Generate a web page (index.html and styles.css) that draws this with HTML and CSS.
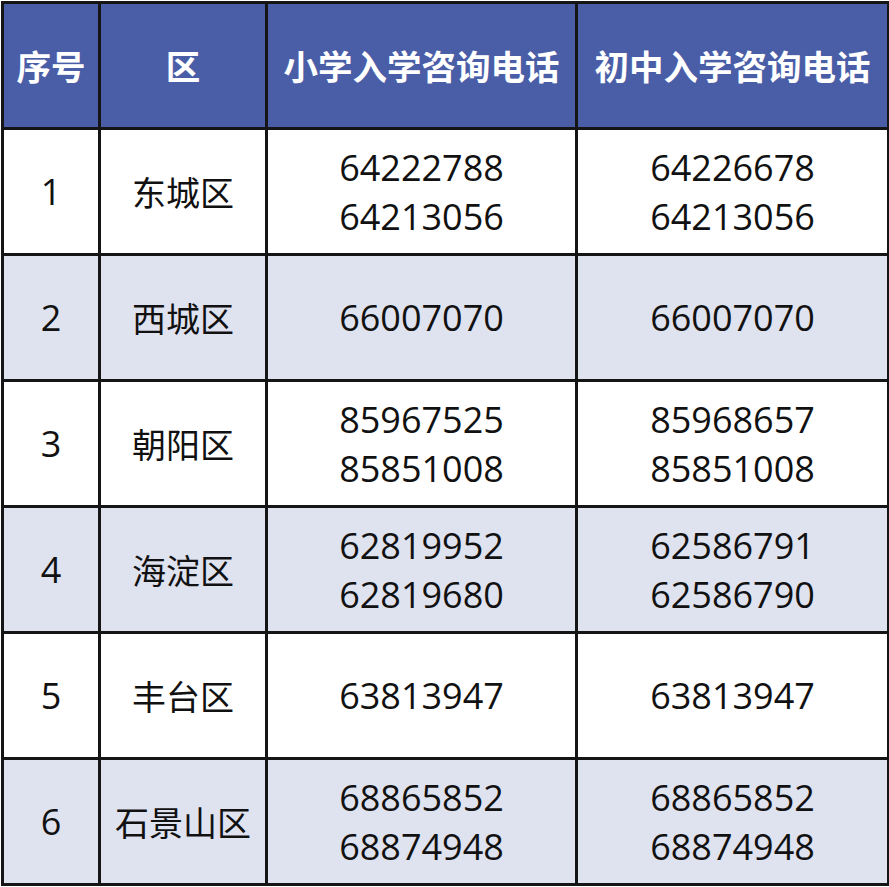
FILE: index.html
```html
<!DOCTYPE html>
<html lang="zh">
<head>
<meta charset="utf-8">
<link rel="stylesheet" href="styles.css">
</head>
<body>
<table class="tbl">
  <colgroup>
    <col class="c1"><col class="c2"><col class="c3"><col class="c4">
  </colgroup>
  <thead>
    <tr><th>序号</th><th>区</th><th>小学入学咨询电话</th><th>初中入学咨询电话</th></tr>
  </thead>
  <tbody>
    <tr><td>1</td><td>东城区</td><td>64222788<br>64213056</td><td>64226678<br>64213056</td></tr>
    <tr class="alt"><td>2</td><td>西城区</td><td>66007070</td><td>66007070</td></tr>
    <tr><td>3</td><td>朝阳区</td><td>85967525<br>85851008</td><td>85968657<br>85851008</td></tr>
    <tr class="alt"><td>4</td><td>海淀区</td><td>62819952<br>62819680</td><td>62586791<br>62586790</td></tr>
    <tr><td>5</td><td>丰台区</td><td>63813947</td><td>63813947</td></tr>
    <tr class="alt"><td>6</td><td>石景山区</td><td>68865852<br>68874948</td><td>68865852<br>68874948</td></tr>
  </tbody>
</table>
</body>
</html>
```
FILE: styles.css
```css
html, body {
  margin: 0;
  padding: 0;
  background: #ffffff;
}
body {
  padding: 1px 0 0 1px;
}
.tbl {
  border-collapse: collapse;
  table-layout: fixed;
  width: 886px;
  font-family: "Open Sans", "Noto Sans CJK SC", sans-serif;
  color: #111111;
}
.c1 { width: 97px; }
.c2 { width: 167px; }
.c3 { width: 310px; }
.c4 { width: 312px; }
.tbl th, .tbl td {
  border: 3px solid #151515;
  text-align: center;
  vertical-align: middle;
  padding: 0;
  height: 126px;
  box-sizing: border-box;
}
.tbl th {
  background: #4a5ea8;
  color: #ffffff;
  font-family: "Noto Sans CJK SC", sans-serif;
  font-weight: 700;
  font-size: 34.5px;
  padding-bottom: 2px;
}
.tbl td {
  font-size: 36px;
  line-height: 49px;
  font-weight: 400;
}
.tbl td:nth-child(2) {
  font-family: "Noto Sans CJK SC", sans-serif;
  font-size: 34px;
}
.alt td {
  background: #dfe2ef;
}
```
